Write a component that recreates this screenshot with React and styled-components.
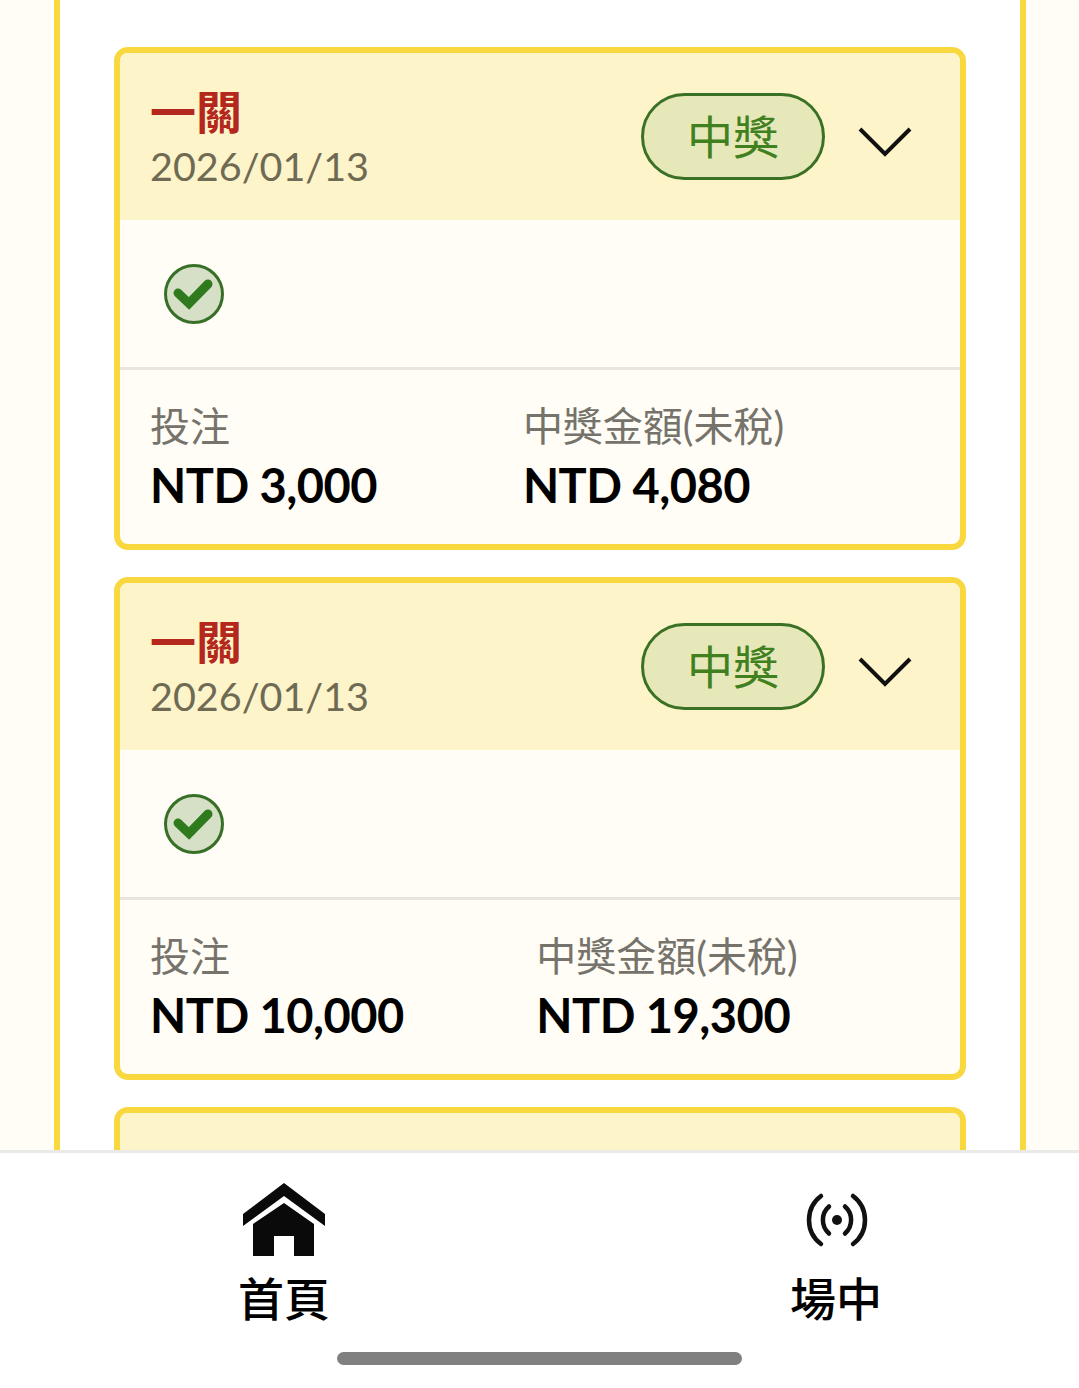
import React from 'react';
import styled, { createGlobalStyle } from 'styled-components';

const GlobalStyle = createGlobalStyle`
  html, body {
    margin: 0;
    padding: 0;
    background: #fffdf6;
  }
  * {
    box-sizing: border-box;
  }
`;

const YELLOW = '#f8d73f';
const FONT = 'Lato, "Noto Sans CJK TC", sans-serif';

const Screen = styled.div`
  width: 1079px;
  height: 1388px;
  display: flex;
  flex-direction: column;
  overflow: hidden;
  font-family: ${FONT};
`;

const Main = styled.main`
  flex: 1;
  min-height: 0;
  overflow: hidden;
  padding: 0 53px 0 54px;
`;

const Panel = styled.div`
  min-height: 100%;
  background: #fff;
  border-left: 6px solid ${YELLOW};
  border-right: 6px solid ${YELLOW};
  padding: 47px 54px 0;
  display: flex;
  flex-direction: column;
  gap: 27px;
`;

const Card = styled.article`
  border: 6px solid ${YELLOW};
  border-radius: 14px;
  background: #fffdf5;
  overflow: hidden;
`;

const CardHeader = styled.header`
  height: 167px;
  background: #fef4c9;
  display: flex;
  align-items: center;
  padding: 0 48px 0 30px;
`;

const TitleBlock = styled.div`
  flex: 1;
  display: flex;
  flex-direction: column;
  padding-top: 1px;
`;

const Title = styled.div`
  font-size: 46px;
  line-height: 56px;
  font-weight: 700;
  color: #b3271c;
`;

const DateText = styled.div`
  font-size: 39.5px;
  line-height: 51px;
  color: #6f6a54;
`;

const Badge = styled.div`
  width: 184px;
  height: 87px;
  border: 3px solid #3b7125;
  border-radius: 44px;
  background: #e7e8ba;
  color: #41801f;
  font-size: 46px;
  line-height: 76px;
  display: flex;
  align-items: center;
  justify-content: center;
`;

const Chevron = styled.svg`
  width: 54px;
  height: 32px;
  margin: 10px 0 0 33px;
`;

const Legs = styled.div`
  height: 147px;
  padding-left: 43px;
  display: flex;
  align-items: center;
`;

const Stats = styled.div`
  height: 177px;
  border-top: 3px solid #e8e6df;
  padding: 30px 30px 0;
  display: flex;
`;

const Stat = styled.div`
  flex: 1 1 auto;
`;

const StatLabel = styled.div`
  font-size: 40px;
  line-height: 52px;
  color: #75736c;
`;

const StatValue = styled.div`
  font-size: 47px;
  line-height: 66px;
  font-weight: 700;
  color: #000;
  letter-spacing: -0.5px;
`;

const BottomNav = styled.nav`
  height: 238px;
  flex: none;
  background: #fff;
  border-top: 3px solid #e9e9e7;
  display: flex;
  flex-direction: column;
`;

const NavItems = styled.div`
  display: flex;
  justify-content: space-between;
  padding: 30px 157px 0 198px;
`;

const NavItem = styled.div`
  width: 172px;
  display: flex;
  flex-direction: column;
  align-items: center;
`;

const NavIcon = styled.div`
  height: 74px;
  display: flex;
  align-items: center;
  justify-content: center;
`;

const NavLabel = styled.div`
  margin-top: 11px;
  font-size: 46px;
  line-height: 62px;
  font-weight: 500;
  color: #000;
`;

const HomeBar = styled.div`
  width: 405px;
  height: 13px;
  margin: 22px 0 0 337px;
  border-radius: 7px;
  background: #808080;
`;

const CheckMark = () => (
  <svg width="62" height="62" viewBox="0 0 62 62">
    <circle cx="31" cy="31" r="28.5" fill="#d6e0c7" stroke="#376f27" strokeWidth="3" />
    <path
      d="M15 30 L26 40.500 L45 21"
      fill="none"
      stroke="#2f7a1c"
      strokeWidth="9"
      strokeLinecap="round"
    />
  </svg>
);

const HomeIcon = () => (
  <svg width="82" height="74" viewBox="0 0 82 74">
    <path d="M41 0 L82 31 V43 L41 13 L0 43 V31 Z" fill="#0a0a0a" />
    <path d="M41 20 L71 41 V73 H51 V53 H31 V73 H10 V41 Z" fill="#0a0a0a" />
  </svg>
);

const LiveIcon = () => (
  <svg width="66" height="56" viewBox="-2 0 66 56" fill="none" stroke="#111" strokeWidth="4.5" strokeLinecap="round">
    <path d="M16 4 A30 30 0 0 0 16 52" />
    <path d="M48 4 A30 30 0 0 1 48 52" />
    <path d="M24 14.500 A18 18 0 0 0 24 41.500" />
    <path d="M40 14.500 A18 18 0 0 1 40 41.500" />
    <circle cx="32" cy="28" r="5" fill="#111" stroke="none" />
  </svg>
);

const bets = [
  { stake: 'NTD 3,000', win: 'NTD 4,080' },
  { stake: 'NTD 10,000', win: 'NTD 19,300' },
];

const BetCard = ({ stake, win }) => (
  <Card>
    <CardHeader>
      <TitleBlock>
        <Title>一關</Title>
        <DateText>2026/01/13</DateText>
      </TitleBlock>
      <Badge>中獎</Badge>
      <Chevron viewBox="0 0 54 32">
        <path d="M2 3 L27 28 L52 3" fill="none" stroke="#111" strokeWidth="4" />
      </Chevron>
    </CardHeader>
    <Legs>
      <CheckMark />
    </Legs>
    <Stats>
      <Stat>
        <StatLabel>投注</StatLabel>
        <StatValue>{stake}</StatValue>
      </Stat>
      <Stat>
        <StatLabel>中獎金額(未稅)</StatLabel>
        <StatValue>{win}</StatValue>
      </Stat>
    </Stats>
  </Card>
);

export default function App() {
  return (
    <>
      <GlobalStyle />
      <Screen lang="zh-TW">
        <Main>
          <Panel>
            {bets.map((bet, i) => (
              <BetCard key={i} {...bet} />
            ))}
            {/* next card is only peeking out above the nav */}
            <Card>
              <CardHeader />
            </Card>
          </Panel>
        </Main>
        <BottomNav>
          <NavItems>
            <NavItem>
              <NavIcon>
                <HomeIcon />
              </NavIcon>
              <NavLabel>首頁</NavLabel>
            </NavItem>
            <NavItem>
              <NavIcon>
                <LiveIcon />
              </NavIcon>
              <NavLabel>場中</NavLabel>
            </NavItem>
          </NavItems>
          <HomeBar />
        </BottomNav>
      </Screen>
    </>
  );
}
